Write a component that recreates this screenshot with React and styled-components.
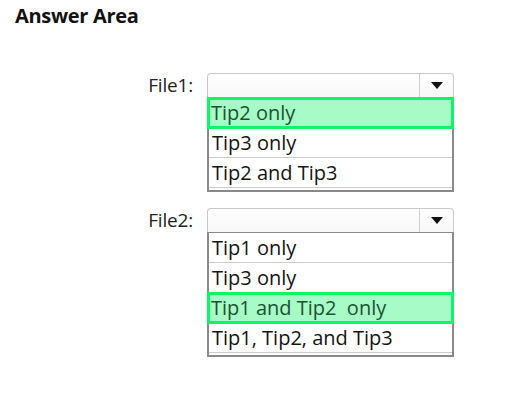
import React from "react";
import styled, { createGlobalStyle } from "styled-components";

const GlobalStyle = createGlobalStyle`
  html, body {
    margin: 0;
    padding: 0;
    background: #ffffff;
  }
  body {
    font-family: "Open Sans", "Noto Sans", sans-serif;
    color: #141414;
  }
`;

const Page = styled.main`
  width: 509px;
  height: 402px;
  padding: 3px 0 0 15px;
  box-sizing: border-box;
`;

const Title = styled.h1`
  margin: 0;
  font-size: 20px;
  line-height: 26px;
  font-weight: 700;
  letter-spacing: -0.3px;
  color: #111;
`;

const Form = styled.div`
  display: flex;
  flex-direction: column;
  gap: 16px;
  margin-top: 44px;
`;

const Field = styled.div`
  display: grid;
  grid-template-columns: 178px 247px;
  column-gap: 14px;
  align-items: start;
`;

const Label = styled.label`
  text-align: right;
  font-size: 19px;
  line-height: 24px;
  letter-spacing: -0.2px;
  color: #222;
`;

const Control = styled.div`
  display: flex;
  flex-direction: column;
`;

const Combo = styled.div`
  height: 24px;
  display: flex;
  border: 1px solid #c9c9c9;
  border-bottom: none;
  border-radius: 4px 4px 0 0;
  background: linear-gradient(#ffffff, #f7f7f7);
  box-sizing: border-box;
`;

const ComboValue = styled.div`
  flex: 1;
`;

const ArrowButton = styled.div`
  width: 33px;
  border-left: 1px solid #cfcfcf;
  display: flex;
  align-items: center;
  justify-content: center;
`;

const Arrow = styled.span`
  width: 0;
  height: 0;
  border-left: 6px solid transparent;
  border-right: 6px solid transparent;
  border-top: 7px solid #111;
`;

const List = styled.ul`
  list-style: none;
  margin: 0;
  padding: 0 0 2px;
  border: 1px solid #8a8a8a;
  border-left-width: 2px;
  border-right-width: 2px;
  border-bottom-width: 2px;
  box-sizing: border-box;
  background: #fff;
`;

const Option = styled.li`
  height: 30px;
  line-height: 29px;
  padding-left: 3px;
  font-size: 20px;
  letter-spacing: 0;
  box-sizing: border-box;
  border-bottom: 1px solid #cccccc;
  color: ${(p) => (p.$selected ? "#1c5230" : "#141414")};
  background: ${(p) => (p.$selected ? "#a6fbc6" : "transparent")};
  outline: ${(p) => (p.$selected ? "3px solid #0ef566" : "none")};
  outline-offset: -2px;
  margin: ${(p) => (p.$selected ? "0 -1px" : "0")};
  white-space: nowrap;
`;

const fields = [
  {
    label: "File1:",
    options: ["Tip2 only", "Tip3 only", "Tip2 and Tip3"],
    selected: 0,
  },
  {
    label: "File2:",
    options: ["Tip1 only", "Tip3 only", "Tip1 and Tip2\u00a0 only", "Tip1, Tip2, and Tip3"],
    selected: 2,
  },
];

const App = () => {
  return (
    <Page>
      <GlobalStyle />
      <Title>Answer Area</Title>
      <Form>
        {fields.map((f) => (
          <Field key={f.label}>
            <Label>{f.label}</Label>
            <Control>
              <Combo>
                <ComboValue />
                <ArrowButton>
                  <Arrow />
                </ArrowButton>
              </Combo>
              <List>
                {f.options.map((o, i) => (
                  <Option key={o} $selected={i === f.selected}>
                    {o}
                  </Option>
                ))}
              </List>
            </Control>
          </Field>
        ))}
      </Form>
    </Page>
  );
};

export default App;
